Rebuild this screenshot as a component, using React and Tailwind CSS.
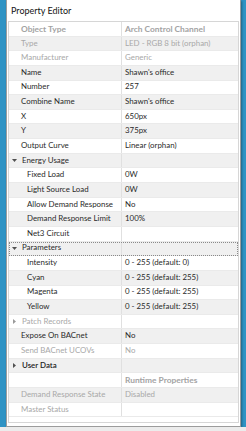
import React from 'react';

// kind: 'h' header, 'd' disabled, 'n' normal, 'g' group expanded, 'c' group collapsed
const rows = [
    { label: 'Object Type', value: 'Arch Control Channel', kind: 'h' },
    { label: 'Type', value: 'LED - RGB 8 bit (orphan)', kind: 'd' },
    { label: 'Manufacturer', value: 'Generic', kind: 'd' },
    { label: 'Name', value: "Shawn's office", kind: 'n' },
    { label: 'Number', value: '257', kind: 'n' },
    { label: 'Combine Name', value: "Shawn's office", kind: 'n' },
    { label: 'X', value: '650px', kind: 'n' },
    { label: 'Y', value: '375px', kind: 'n' },
    { label: 'Output Curve', value: 'Linear (orphan)', kind: 'n' },
    { label: 'Energy Usage', value: '', kind: 'g' },
    { label: 'Fixed Load', value: '0W', kind: 'n', sub: true },
    { label: 'Light Source Load', value: '0W', kind: 'n', sub: true },
    { label: 'Allow Demand Response', value: 'No', kind: 'n', sub: true },
    { label: 'Demand Response Limit', value: '100%', kind: 'n', sub: true },
    { label: 'Net3 Circuit', value: '', kind: 'n', sub: true },
    { label: 'Parameters', value: '', kind: 'g', focus: true },
    { label: 'Intensity', value: '0 - 255 (default: 0)', kind: 'n', sub: true },
    { label: 'Cyan', value: '0 - 255 (default: 255)', kind: 'n', sub: true },
    { label: 'Magenta', value: '0 - 255 (default: 255)', kind: 'n', sub: true },
    { label: 'Yellow', value: '0 - 255 (default: 255)', kind: 'n', sub: true },
    { label: 'Patch Records', value: '', kind: 'c', dim: true },
    { label: 'Expose On BACnet', value: 'No', kind: 'n' },
    { label: 'Send BACnet UCOVs', value: 'No', kind: 'd' },
    { label: 'User Data', value: '', kind: 'c', strong: true },
    { label: '', value: 'Runtime Properties', kind: 'h' },
    { label: 'Demand Response State', value: 'Disabled', kind: 'd' },
    { label: 'Master Status', value: '', kind: 'd' },
];

const Arrow = ({ open, dim }) => (
    <svg width="5" height="5" viewBox="0 0 5 5" className="shrink-0">
        {open
            ? <path d="M0 1 L5 1 L2.5 4 Z" fill={dim ? '#9a9a9a' : '#505050'} />
            : <path d="M1 0 L4 2.5 L1 5 Z" fill={dim ? '#9a9a9a' : '#505050'} />}
    </svg>
);

const Row = ({ row, i }) => {
    const grey = i % 2 === 1;
    const head = row.kind === 'h';
    const txt =
        head ? 'text-[#a3a3a3] font-bold text-[8.4px]' :
        row.kind === 'd' || row.dim ? 'text-[#a8a8a8]' :
        row.strong ? 'text-[#222] font-semibold' : 'text-[#2a2a2a]';
    const isGroup = row.kind === 'g' || row.kind === 'c';

    return (
        <div className={`flex h-[14.65px] items-center border-b border-[#eaeaea] ${grey ? 'bg-[#f0f0f0]' : 'bg-white'} ${row.focus ? 'outline outline-1 outline-dotted outline-[#8a8a8a] -outline-offset-1' : ''}`}>
            <div className={`flex items-center h-full w-[113px] shrink-0 border-r border-[#e0e0e0] ${txt} ${isGroup ? 'pl-[3px] gap-[5px]' : row.sub ? 'pl-[18px]' : 'pl-[12px]'}`}>
                {isGroup && <Arrow open={row.kind === 'g'} dim={row.dim} />}
                <span className="whitespace-nowrap">{row.label}</span>
            </div>
            <div className={`pl-[3px] whitespace-nowrap ${row.kind === 'd' ? 'text-[#a8a8a8]' : head ? 'text-[#a3a3a3] font-bold text-[8.4px]' : 'text-[#2a2a2a]'}`}>
                {row.value}
            </div>
        </div>
    );
};

export default function App() {
    return (
        <div className="w-[246px] h-[431px] bg-[#2f93c4] flex flex-col overflow-hidden" style={{ fontFamily: 'Lato, "Open Sans", sans-serif' }}>
            <div className="flex h-[427px]">
                <div className="w-[6px] shrink-0 bg-[#2f93c4]" />
                <div className="w-[235px] shrink-0 bg-white border-x border-b border-[#9c9c9c] shadow-[1px_1px_2px_rgba(0,0,0,0.35)] flex flex-col">
                    <div className="h-[21px] pl-[4px] pt-[1px] flex items-center text-[9px] text-[#151515]">Property Editor</div>
                    <div className="mx-[1px] flex-1 flex flex-col border border-[#d6d6d6] text-[7.9px] leading-none mb-[3px]">
                        {rows.map((r, i) => <Row key={i} row={r} i={i} />)}
                    </div>
                </div>
            </div>
            <div className="h-[4px] bg-[#ececec]" />
        </div>
    );
}
